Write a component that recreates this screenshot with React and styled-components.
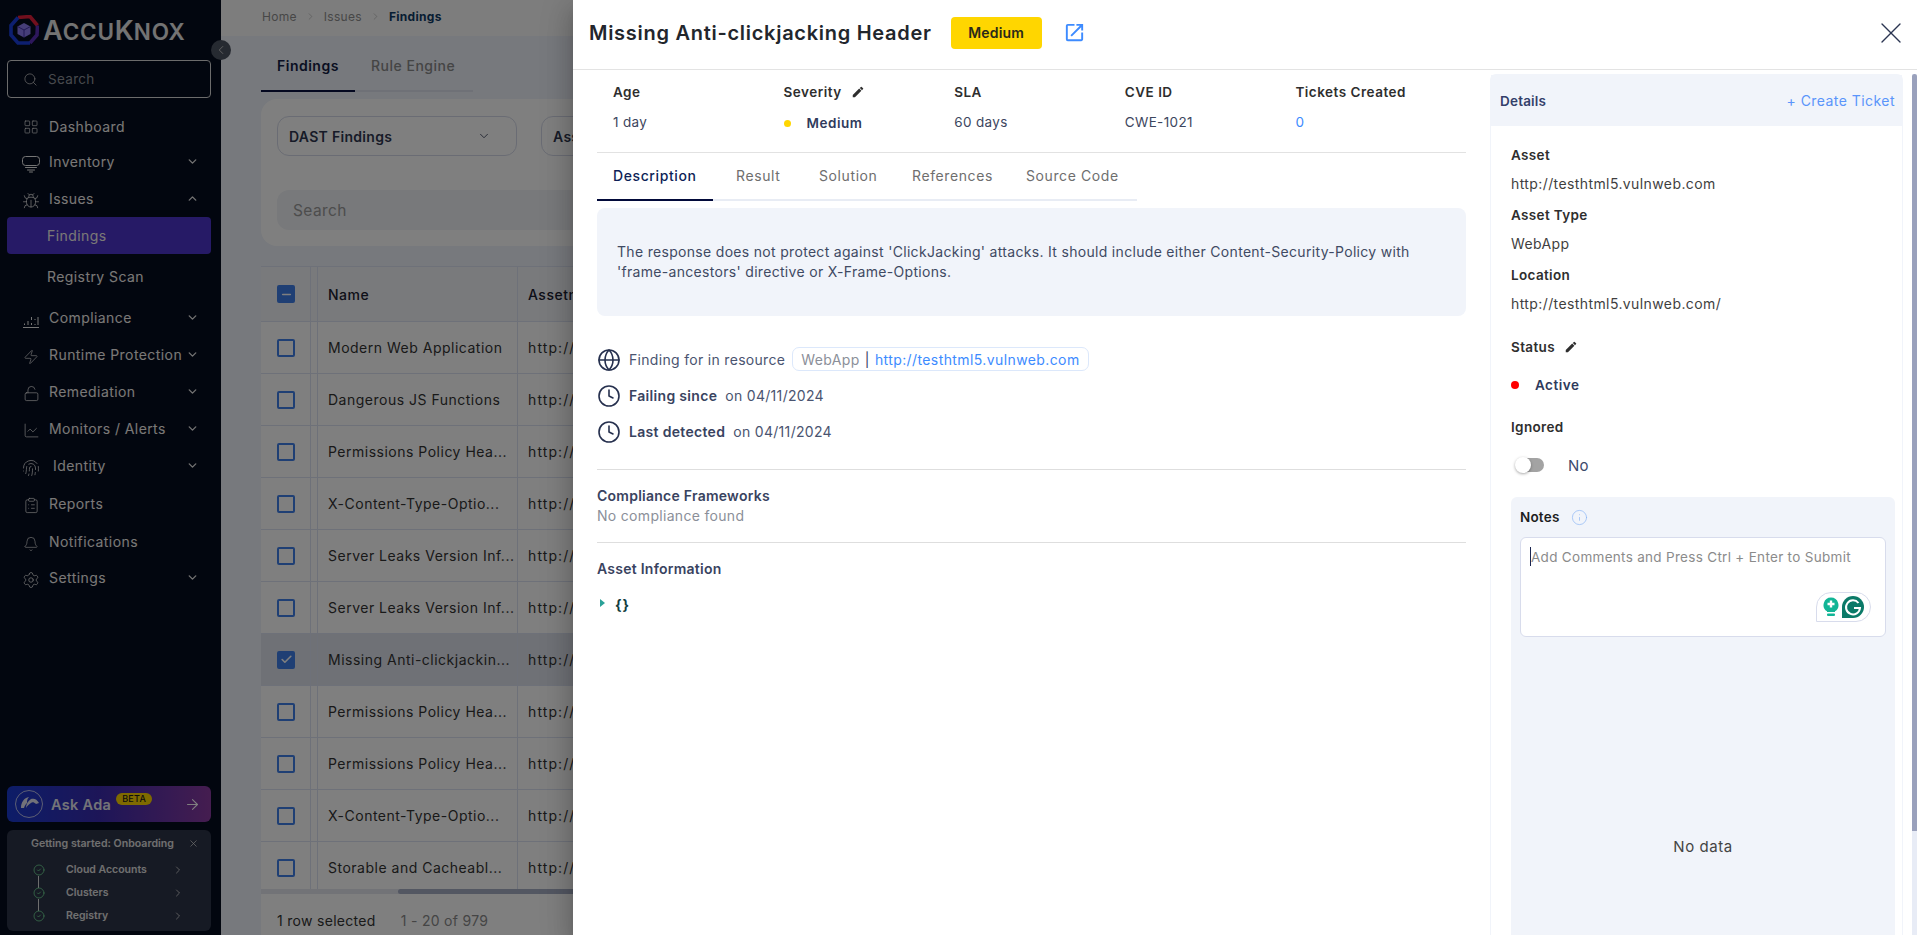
import React from "react";
import styled, { createGlobalStyle } from "styled-components";
import {
  LayoutGrid, Bug, Zap, LockOpen, ChartLine, Fingerprint, ClipboardList, Bell, Settings,
  ChevronDown, ChevronUp, ChevronRight, ChevronLeft, Search, Globe, Clock, X, Info, ArrowRight, Check, Minus, CircleCheck,
} from "lucide-react";
import { MdEdit, MdOpenInNew } from "react-icons/md";

const FONT = `"Inter", "Noto Sans", "Liberation Sans", sans-serif`;

const Global = createGlobalStyle`
  html, body { margin: 0; padding: 0; height: 100%; overflow: hidden; background: #eef2fa; }
  #root { height: 100%; }
  * { box-sizing: border-box; }
  body { font-family: ${FONT}; }
`;

const Page = styled.div`
  position: relative;
  display: flex;
  width: 1917px;
  height: 935px;
  overflow: hidden;
`;

/* ---------- sidebar ---------- */
const Sidebar = styled.aside`
  width: 221px;
  flex: none;
  height: 100%;
  background: #050c1e;
  color: #f2f2f2;
  display: flex;
  flex-direction: column;
  padding: 15px 10px 4px 7px;
  position: relative;
`;
const Logo = styled.div`
  display: flex;
  align-items: center;
  height: 30px;
  padding-left: 2px;
  gap: 4px;
  color: #e6e6e6;
  font-weight: 600;
  font-size: 27px;
  letter-spacing: 0.2px;
  line-height: 1;
`;
const LogoSmall = styled.span`
  font-size: 22.5px;
  letter-spacing: 0.7px;
`;
const SearchBox = styled.div`
  margin-top: 15px;
  height: 38px;
  border: 1px solid #d8d8d8;
  border-radius: 4px;
  display: flex;
  align-items: center;
  gap: 10px;
  padding-left: 15px;
  font-size: 13.5px;
  color: #8f939b;
  letter-spacing: 0.3px;
  svg { color: #cfcfcf; }
`;
const Nav = styled.nav`
  margin-top: 11px;
  display: flex;
  flex-direction: column;
`;
const NavItem = styled.div`
  height: ${(p) => p.$h}px;
  display: flex;
  align-items: center;
  padding-left: 13px;
  padding-right: 12px;
  font-size: 14px;
  letter-spacing: 0.42px;
  color: #f4f1ee;
`;
const NavIcon = styled.span`
  width: 18px;
  height: 18px;
  margin-right: 9px;
  margin-left: 2px;
  margin-top: ${(p) => p.$dy || 4}px;
  display: inline-flex;
  align-items: center;
  justify-content: center;
  flex: none;
  color: #ececec;
`;
const NavLabel = styled.span`
  flex: 1;
  white-space: nowrap;
  margin-left: ${(p) => p.$ml || 0}px;
`;
const SubItem = styled.div`
  height: ${(p) => p.$h}px;
  display: flex;
  align-items: center;
  padding-left: 40px;
  border-radius: 4px;
  font-size: 14px;
  letter-spacing: 0.42px;
  color: #f4f1ee;
  background: ${(p) => (p.$active ? "#4c34cc" : "transparent")};
`;
const Chev = styled.span`
  display: inline-flex;
  color: #e4e4e4;
`;
const AskAda = styled.div`
  margin-top: auto;
  height: 36px;
  border-radius: 6px;
  background: linear-gradient(90deg, #1a3ad0 0%, #3a2bb0 45%, #8a3aa0 100%);
  display: flex;
  align-items: center;
  padding: 0 10px 0 8px;
  color: #e8e8f0;
  font-size: 14.5px;
  font-weight: 600;
  letter-spacing: 0.3px;
  > svg:last-child { color: #fff; }
`;
const AdaName = styled.span`
  margin-left: 8px;
`;
const AdaBadge = styled.span`
  margin: -10px auto 0 5px;
  background: #ffd400;
  color: #1a1a1a;
  font-size: 9px;
  font-weight: 500;
  letter-spacing: 0.3px;
  padding: 1px 6px;
  border-radius: 7px;
  line-height: 10px;
`;
const StartCard = styled.div`
  margin-top: 8px;
  height: 101px;
  border-radius: 6px;
  background: #2d3448;
  padding: 6px 10px 0 24px;
  color: #e0e0e0;
  font-size: 10.5px;
  font-weight: 600;
`;
const StartTitle = styled.div`
  display: flex;
  align-items: center;
  justify-content: space-between;
  height: 14px;
  font-size: 10.6px;
  white-space: nowrap;
  padding-right: 2px;
`;
const StartRow = styled.div`
  display: flex;
  align-items: center;
  height: 23px;
  position: relative;
  margin-top: ${(p) => p.$mt || 0}px;
  padding-left: 2px;
  padding-right: 17px;
`;
const StartText = styled.span`
  margin-left: 21px;
  flex: 1;
`;
const Connector = styled.span`
  position: absolute;
  left: 7px;
  top: 18px;
  width: 1px;
  height: 12px;
  background: #dcdcdc;
`;
const Collapse = styled.span`
  position: absolute;
  left: 211px;
  top: 40px;
  width: 20px;
  height: 20px;
  border-radius: 50%;
  background: #4d5462;
  color: #c8c8c8;
  display: flex;
  align-items: center;
  justify-content: center;
  z-index: 2;
`;

/* ---------- main page behind the drawer ---------- */
const Main = styled.main`
  flex: 1;
  min-width: 0;
  display: flex;
  flex-direction: column;
  background: #eef2fa;
`;
const Crumbs = styled.div`
  height: 36px;
  flex: none;
  background: #fbfbfb;
  padding: 0 0 4px 41px;
  display: flex;
  align-items: center;
  gap: 8px;
  font-size: 12px;
  color: #8f8f8f;
  letter-spacing: 0.3px;
  b { color: #0f3a66; font-weight: 700; }
`;
const Content = styled.div`
  flex: 1;
  padding: 0 0 0 40px;
  display: flex;
  flex-direction: column;
  min-height: 0;
`;
const PageTabs = styled.div`
  display: flex;
  height: 56px;
  width: 212px;
  flex: none;
  border-bottom: 2px solid #dfe3ee;
`;
const PageTab = styled.div`
  height: 56px;
  width: ${(p) => p.$w}px;
  flex: none;
  display: flex;
  align-items: center;
  padding: 5px 0 0 16px;
  font-size: 14px;
  letter-spacing: 0.5px;
  font-weight: ${(p) => (p.$active ? 600 : 500)};
  color: ${(p) => (p.$active ? "#141d44" : "#8a8a8a")};
  border-bottom: 2px solid ${(p) => (p.$active ? "#081040" : "transparent")};
`;
const FilterCard = styled.div`
  margin-top: 7px;
  height: 147px;
  flex: none;
  border-radius: 16px;
  background: #ffffff;
  padding: 17px 16px;
`;
const FilterRow = styled.div`
  display: flex;
  gap: 24px;
`;
const Select = styled.div`
  width: 240px;
  height: 40px;
  border: 1px solid #d5d9e8;
  border-radius: 12px;
  display: flex;
  align-items: center;
  justify-content: space-between;
  padding: 0 25px 0 11px;
  font-size: 14px;
  font-weight: 600;
  color: #2f3750;
  letter-spacing: 0.3px;
  flex: none;
`;
const PageSearch = styled.div`
  margin-top: 34px;
  height: 40px;
  border-radius: 12px;
  background: #f0f2f6;
  display: flex;
  align-items: center;
  padding-left: 16px;
  font-size: 15.5px;
  letter-spacing: 0.4px;
  color: #9a9a9a;
`;
const Table = styled.div`
  margin-top: 20px;
  flex: 1;
  min-height: 0;
  overflow: hidden;
  display: flex;
  flex-direction: column;
`;
const Row = styled.div`
  display: grid;
  grid-template-columns: 49px 7px 200px 1fr;
  height: ${(p) => (p.$head ? 55 : 52)}px;
  flex: none;
  background: ${(p) => (p.$selected ? "#dfe3ec" : p.$head ? "#f2f4f8" : "#ffffff")};
  border-top: 1px solid #dde3f2;
  font-size: 14px;
  letter-spacing: 0.5px;
  color: ${(p) => (p.$head ? "#1a2030" : "#333")};
  font-weight: ${(p) => (p.$head ? 500 : 400)};
`;
const Cell = styled.div`
  display: flex;
  align-items: center;
  padding-left: ${(p) => p.$pl ?? 10}px;
  border-left: ${(p) => (p.$noLine ? "none" : "1px solid #dde3f2")};
  overflow: hidden;
  white-space: nowrap;
  min-width: 0;
  letter-spacing: ${(p) => (p.$wide ? "1.1px" : "inherit")};
`;
const Box = styled.span`
  width: 18px;
  height: 18px;
  border-radius: 2px;
  border: 2px solid #3f7fe8;
  background: ${(p) => (p.$on ? "#3f7fe8" : "transparent")};
  display: inline-flex;
  align-items: center;
  justify-content: center;
  color: #fff;
`;
const HScroll = styled.div`
  height: 5px;
  flex: none;
  background: #e4e7ef;
  padding-left: 137px;
`;
const HThumb = styled.div`
  height: 5px;
  width: 500px;
  border-radius: 3px;
  background: #a7aec4;
`;
const TableFoot = styled.div`
  height: 41px;
  flex: none;
  background: #fff;
  display: flex;
  align-items: center;
  padding: 12px 0 0 16px;
  gap: 25px;
  font-size: 14px;
  letter-spacing: 0.3px;
  color: #333;
  span { color: #8a8a8a; }
`;
const Overlay = styled.div`
  position: absolute;
  inset: 0;
  background: rgba(0, 0, 0, 0.5);
  z-index: 5;
`;

/* ---------- drawer ---------- */
const Drawer = styled.section`
  position: absolute;
  top: 0;
  right: 0;
  bottom: 0;
  width: 1344px;
  background: #fff;
  z-index: 6;
  display: flex;
  flex-direction: column;
  box-shadow: 0 8px 10px -5px rgba(0,0,0,.2), 0 16px 24px 2px rgba(0,0,0,.14), 0 6px 30px 5px rgba(0,0,0,.12);
`;
const DrawerHead = styled.header`
  height: 70px;
  flex: none;
  border-bottom: 1px solid #e3e3e3;
  display: flex;
  align-items: center;
  padding: 0 8px 4px 16px;
`;
const Title = styled.h1`
  margin: 0;
  font-size: 20px;
  font-weight: 600;
  color: #22262c;
  letter-spacing: 0.72px;
  white-space: nowrap;
`;
const Badge = styled.span`
  margin-left: 19px;
  width: 91px;
  height: 32px;
  border-radius: 4px;
  background: #ffd600;
  color: #2a2a1a;
  font-size: 14px;
  font-weight: 600;
  letter-spacing: 0.2px;
  display: flex;
  align-items: center;
  justify-content: center;
`;
const OpenLink = styled.span`
  margin-left: 21px;
  display: inline-flex;
  color: #3d8bff;
`;
const CloseBtn = styled.span`
  margin-left: auto;
  display: inline-flex;
  color: #2b3552;
`;
const DrawerBody = styled.div`
  flex: 1;
  min-height: 0;
  display: flex;
  position: relative;
`;
const LeftCol = styled.div`
  width: 917px;
  flex: none;
  padding: 0 24px;
`;
const Meta = styled.div`
  display: grid;
  grid-template-columns: repeat(5, 170.6px);
  height: 83px;
  padding-left: 16px;
  border-bottom: 1px solid #e2e2e2;
`;
const MetaCol = styled.div`
  display: flex;
  flex-direction: column;
  padding-top: 13px;
`;
const MetaLabel = styled.div`
  height: 18px;
  display: flex;
  align-items: center;
  gap: 9px;
  font-size: 13.5px;
  font-weight: 600;
  letter-spacing: 0.5px;
  color: #2e2e2e;
`;
const MetaValue = styled.div`
  margin-top: 12px;
  height: 18px;
  display: flex;
  align-items: center;
  font-size: 13.5px;
  letter-spacing: 0.35px;
  color: ${(p) => p.$color || "#3d465e"};
`;
const Dot = styled.span`
  width: ${(p) => p.$s || 7}px;
  height: ${(p) => p.$s || 7}px;
  border-radius: 50%;
  background: ${(p) => p.$color};
  flex: none;
  margin-top: ${(p) => p.$mt || 0}px;
`;
const DotText = styled.span`
  margin-left: ${(p) => p.$ml || 16}px;
  margin-top: ${(p) => p.$mt || 0}px;
  font-weight: 600;
  color: #2f3a5c;
  font-size: 13.5px;
  letter-spacing: 0.5px;
`;
const DTabs = styled.div`
  display: flex;
  width: 540px;
  height: 48px;
  border-bottom: 2px solid #e8ecf4;
`;
const DTab = styled.div`
  height: 48px;
  width: ${(p) => p.$w}px;
  flex: none;
  display: flex;
  align-items: center;
  padding: 0 0 1px ${(p) => p.$pl}px;
  font-size: 14px;
  white-space: nowrap;
  letter-spacing: 0.6px;
  font-weight: ${(p) => (p.$active ? 500 : 400)};
  color: ${(p) => (p.$active ? "#0e1f57" : "#6e6e6e")};
  border-bottom: 2px solid ${(p) => (p.$active ? "#020a3a" : "transparent")};
`;
const DescCard = styled.div`
  margin-top: 7px;
  height: 108px;
  border-radius: 8px;
  background: #f1f4fa;
  padding: 34px 20px 0;
  font-size: 14px;
  line-height: 20px;
  letter-spacing: 0.31px;
  color: #3f4a63;
  white-space: nowrap;
`;
const InfoList = styled.div`
  margin-top: 25px;
  display: flex;
  flex-direction: column;
`;
const InfoRow = styled.div`
  height: 36px;
  display: flex;
  align-items: center;
  font-size: 14px;
  letter-spacing: 0.31px;
  color: #4a5470;
  svg { color: #26304e; flex: none; margin-right: 8px; margin-top: 2px; }
  b { font-weight: 600; color: #39435f; margin-right: 8px; }
`;
const ResourceTag = styled.span`
  margin-left: 7px;
  height: 24px;
  padding: 0 8px;
  border: 1px solid #dce8fb;
  border-radius: 7px;
  display: inline-flex;
  align-items: center;
  gap: 5px;
  letter-spacing: 0.4px;
  color: #8b8f99;
  a { color: #3d8bff; text-decoration: none; }
  i { font-style: normal; color: #39435f; }
`;
const Section = styled.div`
  margin-top: ${(p) => p.$mt}px;
  border-top: 1px solid #dedede;
  padding-top: ${(p) => p.$pt}px;
  height: ${(p) => p.$h}px;
`;
const SectionTitle = styled.div`
  font-size: 14px;
  font-weight: 600;
  letter-spacing: 0.25px;
  line-height: 20px;
  color: #39435f;
`;
const SectionText = styled.div`
  font-size: 14px;
  line-height: 20px;
  letter-spacing: 0.31px;
  color: #8b8f99;
`;
const JsonRow = styled.div`
  margin-top: 15px;
  display: flex;
  align-items: center;
  gap: 10px;
  height: 20px;
  font-weight: 700;
  font-size: 14px;
  letter-spacing: 1px;
  color: #0f3d3e;
`;
const Caret = styled.span`
  width: 0;
  height: 0;
  margin-left: 3px;
  margin-top: -3px;
  border-left: 5px solid #2aa198;
  border-top: 4.5px solid transparent;
  border-bottom: 4.5px solid transparent;
`;
const RightCol = styled.div`
  width: 413px;
  flex: none;
  margin-top: 4px;
  border: 1px solid #f1f4fa;
  border-bottom: none;
  border-radius: 6px 6px 0 0;
  display: flex;
  flex-direction: column;
`;
const DetailsHead = styled.div`
  height: 51px;
  flex: none;
  background: #f1f4fa;
  display: flex;
  align-items: center;
  justify-content: space-between;
  padding: 0 7px 0 9px;
  font-size: 13.5px;
  font-weight: 600;
  letter-spacing: 0.2px;
  color: #33406a;
  span { color: #5a95fb; font-weight: 400; font-size: 14px; letter-spacing: 0.45px; }
`;
const DetailsBody = styled.div`
  flex: 1;
  padding: 19px 7px 0 20px;
  display: flex;
  flex-direction: column;
  min-height: 0;
`;
const FieldLabel = styled.div`
  height: 20px;
  display: flex;
  align-items: center;
  gap: 9px;
  font-size: 13.5px;
  font-weight: 600;
  letter-spacing: 0.35px;
  color: #2e2e2e;
  margin-top: ${(p) => p.$mt || 0}px;
`;
const FieldValue = styled.div`
  height: 20px;
  margin-top: 8px;
  display: flex;
  align-items: center;
  font-size: 14px;
  letter-spacing: 0.4px;
  color: #3f3f3f;
`;
const StatusRow = styled.div`
  height: 20px;
  margin-top: 18px;
  display: flex;
  align-items: center;
`;
const ToggleRow = styled.div`
  display: flex;
  align-items: center;
  margin-top: 18px;
  margin-left: 4px;
  height: 20px;
  font-size: 15px;
  letter-spacing: 0.2px;
  color: #3d4a6b;
`;
const Track = styled.span`
  position: relative;
  width: 27px;
  height: 14px;
  border-radius: 7px;
  background: #a3a3a3;
  margin-right: 24px;
  margin-left: 2px;
`;
const Knob = styled.span`
  position: absolute;
  left: -2px;
  top: -1px;
  width: 16px;
  height: 16px;
  border-radius: 50%;
  background: #fff;
  box-shadow: 0 1px 3px rgba(0,0,0,.35);
`;
const NotesPanel = styled.div`
  margin-top: 22px;
  flex: 1;
  border-radius: 6px 6px 0 0;
  background: #f1f4fa;
  padding: 10px 9px 0;
  display: flex;
  flex-direction: column;
  min-height: 0;
`;
const NotesHead = styled.div`
  height: 20px;
  display: flex;
  align-items: center;
  gap: 11px;
  font-size: 13.5px;
  font-weight: 600;
  letter-spacing: 0.2px;
  color: #1e1e1e;
  svg { color: #8db7f5; }
`;
const TextBox = styled.div`
  position: relative;
  margin-top: 10px;
  height: 100px;
  flex: none;
  border: 1px solid #d8dcec;
  border-radius: 6px;
  background: #fff;
  padding: 9px 9px;
  display: flex;
  align-items: flex-start;
  font-size: 13.5px;
  line-height: 20px;
  letter-spacing: 0.3px;
  color: #8b8b8b;
  white-space: nowrap;
`;
const Caretbar = styled.span`
  width: 1px;
  height: 19px;
  background: #1a2550;
  flex: none;
`;
const Grammarly = styled.span`
  position: absolute;
  right: 14px;
  bottom: 14px;
  width: 55px;
  height: 30px;
  background: #fff;
  border: 1px solid #d8dcec;
  border-radius: 15px 15px 15px 0;
  display: flex;
  align-items: center;
  justify-content: center;
  gap: 3px;
`;
const NoData = styled.div`
  flex: 1;
  display: flex;
  align-items: center;
  justify-content: center;
  font-size: 15px;
  letter-spacing: 0.55px;
  color: #444;
  padding-top: 120px;
`;
const VTrack = styled.span`
  position: absolute;
  right: 0;
  top: 4px;
  bottom: 0;
  width: 5px;
  background: #e8ecf6;
`;
const VThumb = styled.span`
  display: block;
  width: 5px;
  height: 757px;
  border-radius: 3px 3px 0 0;
  background: #9aa1bc;
`;

const InventoryIcon = () => (
  <svg width="18" height="18" viewBox="0 0 18 18" fill="none" stroke="currentColor" strokeWidth="1">
    <rect x="0.5" y="1.5" width="17" height="9" rx="3" />
    <path d="M3.5 12.5h11M5.5 15h7M7.5 17h3" strokeLinecap="round" />
  </svg>
);
const ComplianceIcon = () => (
  <svg width="18" height="18" viewBox="0 0 18 18" fill="none" stroke="currentColor" strokeWidth="1">
    <path d="M1 17.5h16M2.5 15v-1.5M6 15v-4M9.5 15v-2M9.5 10V7M13 15v-1M13 10V9M16 15V7" />
  </svg>
);
const LogoMark = () => (
  <svg width="30" height="30" viewBox="0 0 30 30">
    <path d="M9 2.5 21 1.5 28.5 10.5" fill="none" stroke="#e21f3a" strokeWidth="3.6" />
    <path d="M28.5 10.5 28 20 21 28" fill="none" stroke="#5a2fb8" strokeWidth="3.6" />
    <path d="M21 28 9 28 2 20 2 10.5 9 2.5" fill="none" stroke="#1a3fe0" strokeWidth="3.6" />
    <path d="M15 8l6.5 3.5v7.5L15 22.5 8.5 19v-7.5z" fill="#8d7cf0" />
    <path d="M8.5 11.5 15 15l6.5-3.5M15 15v7.5" fill="none" stroke="#3a2aa0" strokeWidth="0.9" />
  </svg>
);
const AdaLogo = () => (
  <svg width="28" height="28" viewBox="0 0 28 28" fill="none">
    <circle cx="14" cy="14" r="13.5" stroke="#e0e0f0" strokeWidth="0.8" />
    <path d="M6 18c0-6 3-10 8-11-2 2-2 4-2 6-1 1-2 2-3 5M11 18c0-4 2-7 5-9 3-1 6 0 8 4l-3 1c-2-2-4-2-5-1-2 1-4 3-5 5" fill="#e4e4f2" />
  </svg>
);
const GrammarlyBulb = () => (
  <svg width="16" height="20" viewBox="0 0 16 20">
    <path d="M8 0.5a7.5 7.5 0 0 0-4 13.8V15h8v-.7A7.5 7.5 0 0 0 8 .5z" fill="#12b596" />
    <path d="M8 3.5v7M4.5 7h7" stroke="#fff" strokeWidth="2.4" />
    <rect x="4" y="16.5" width="8" height="2.5" rx="1" fill="#12b596" />
  </svg>
);
const GrammarlyG = () => (
  <svg width="22" height="22" viewBox="0 0 22 22">
    <path d="M11 0a11 11 0 1 1 0 22H0V11A11 11 0 0 1 11 0z" fill="#0b7a68" />
    <path d="M16.5 7a7 7 0 1 0 1.5 5h-6" fill="none" stroke="#fff" strokeWidth="2" />
  </svg>
);

const rows = [
  "Modern Web Application",
  "Dangerous JS Functions",
  "Permissions Policy Hea...",
  "X-Content-Type-Optio...",
  "Server Leaks Version Inf...",
  "Server Leaks Version Inf...",
  "Missing Anti-clickjackin...",
  "Permissions Policy Hea...",
  "Permissions Policy Hea...",
  "X-Content-Type-Optio...",
  "Storable and Cacheabl...",
];

const Down = () => <Chev><ChevronDown size={13} strokeWidth={2.6} /></Chev>;
const Done = () => <CircleCheck size={12} strokeWidth={1.5} color="#74e89c" />;

export default function App() {
  return (
    <Page>
      <Global />
      <Sidebar>
        <Logo>
          <LogoMark />
          <span>A<LogoSmall>CCU</LogoSmall>K<LogoSmall>NOX</LogoSmall></span>
        </Logo>
        <SearchBox><Search size={15} strokeWidth={1.2} />Search</SearchBox>
        <Nav>
          <NavItem $h={35}><NavIcon $dy={1}><LayoutGrid size={16} strokeWidth={1} /></NavIcon><NavLabel>Dashboard</NavLabel></NavItem>
          <NavItem $h={35}><NavIcon><InventoryIcon /></NavIcon><NavLabel>Inventory</NavLabel><Down /></NavItem>
          <NavItem $h={38}><NavIcon $dy={5}><Bug size={18} strokeWidth={1} /></NavIcon><NavLabel>Issues</NavLabel><Chev><ChevronUp size={13} strokeWidth={2.6} /></Chev></NavItem>
          <SubItem $h={37} $active>Findings</SubItem>
          <SubItem $h={44}>Registry Scan</SubItem>
          <NavItem $h={38}><NavIcon><ComplianceIcon /></NavIcon><NavLabel>Compliance</NavLabel><Down /></NavItem>
          <NavItem $h={37}><NavIcon><Zap size={16} strokeWidth={1} /></NavIcon><NavLabel>Runtime Protection</NavLabel><Down /></NavItem>
          <NavItem $h={37}><NavIcon><LockOpen size={17} strokeWidth={1} /></NavIcon><NavLabel>Remediation</NavLabel><Down /></NavItem>
          <NavItem $h={37}><NavIcon><ChartLine size={17} strokeWidth={1} /></NavIcon><NavLabel>Monitors / Alerts</NavLabel><Down /></NavItem>
          <NavItem $h={37}><NavIcon><Fingerprint size={18} strokeWidth={1} /></NavIcon><NavLabel $ml={4}>Identity</NavLabel><Down /></NavItem>
          <NavItem $h={39}><NavIcon><ClipboardList size={17} strokeWidth={1} /></NavIcon><NavLabel>Reports</NavLabel></NavItem>
          <NavItem $h={37}><NavIcon><Bell size={16} strokeWidth={1} /></NavIcon><NavLabel>Notifications</NavLabel></NavItem>
          <NavItem $h={35}><NavIcon><Settings size={18} strokeWidth={1} /></NavIcon><NavLabel>Settings</NavLabel><Down /></NavItem>
        </Nav>
        <AskAda>
          <AdaLogo />
          <AdaName>Ask Ada</AdaName>
          <AdaBadge>BETA</AdaBadge>
          <ArrowRight size={17} strokeWidth={1.5} />
        </AskAda>
        <StartCard>
          <StartTitle>Getting started: Onboarding<X size={11} strokeWidth={1.5} /></StartTitle>
          <StartRow $mt={8}>
            <Done />
            <Connector />
            <StartText>Cloud Accounts</StartText>
            <ChevronRight size={12} strokeWidth={1.5} />
          </StartRow>
          <StartRow>
            <Done />
            <Connector />
            <StartText>Clusters</StartText>
            <ChevronRight size={12} strokeWidth={1.5} />
          </StartRow>
          <StartRow>
            <Done />
            <StartText>Registry</StartText>
            <ChevronRight size={12} strokeWidth={1.5} />
          </StartRow>
        </StartCard>
        <Collapse><ChevronLeft size={14} strokeWidth={1.6} /></Collapse>
      </Sidebar>

      <Main>
        <Crumbs>Home <ChevronRight size={11} strokeWidth={1} /> Issues <ChevronRight size={11} strokeWidth={1} /> <b>Findings</b></Crumbs>
        <Content>
          <PageTabs>
            <PageTab $active $w={94}>Findings</PageTab>
            <PageTab $w={118}>Rule Engine</PageTab>
          </PageTabs>
          <FilterCard>
            <FilterRow>
              <Select>DAST Findings <ChevronDown size={14} strokeWidth={1.4} /></Select>
              <Select>Asset</Select>
            </FilterRow>
            <PageSearch>Search</PageSearch>
          </FilterCard>
          <Table>
            <Row $head>
              <Cell $noLine $pl={16}><Box $on><Minus size={13} strokeWidth={3} /></Box></Cell>
              <Cell />
              <Cell>Name</Cell>
              <Cell>Assetname</Cell>
            </Row>
            {rows.map((name, i) => (
              <Row key={i} $selected={i === 6}>
                <Cell $noLine $pl={16}>
                  <Box $on={i === 6}>{i === 6 && <Check size={13} strokeWidth={3} />}</Box>
                </Cell>
                <Cell />
                <Cell>{name}</Cell>
                <Cell $wide>http://testhtml5.vulnweb.com</Cell>
              </Row>
            ))}
          </Table>
          <HScroll><HThumb /></HScroll>
          <TableFoot>1 row selected <span>1 - 20 of 979</span></TableFoot>
        </Content>
      </Main>

      <Overlay />

      <Drawer>
        <DrawerHead>
          <Title>Missing Anti-clickjacking Header</Title>
          <Badge>Medium</Badge>
          <OpenLink><MdOpenInNew size={23} /></OpenLink>
          <CloseBtn><X size={36} strokeWidth={0.9} /></CloseBtn>
        </DrawerHead>
        <DrawerBody>
          <LeftCol>
            <Meta>
              <MetaCol><MetaLabel>Age</MetaLabel><MetaValue>1 day</MetaValue></MetaCol>
              <MetaCol>
                <MetaLabel>Severity <MdEdit size={14} /></MetaLabel>
                <MetaValue><Dot $color="#ffd600" $mt={2} /><DotText $mt={2}>Medium</DotText></MetaValue>
              </MetaCol>
              <MetaCol><MetaLabel>SLA</MetaLabel><MetaValue>60 days</MetaValue></MetaCol>
              <MetaCol><MetaLabel>CVE ID</MetaLabel><MetaValue>CWE-1021</MetaValue></MetaCol>
              <MetaCol><MetaLabel>Tickets Created</MetaLabel><MetaValue $color="#3d8bff">0</MetaValue></MetaCol>
            </Meta>
            <DTabs>
              <DTab $active $w={116} $pl={16}>Description</DTab>
              <DTab $w={83} $pl={23}>Result</DTab>
              <DTab $w={93} $pl={23}>Solution</DTab>
              <DTab $w={114} $pl={23}>References</DTab>
              <DTab $w={134} $pl={23}>Source Code</DTab>
            </DTabs>
            <DescCard>
              The response does not protect against 'ClickJacking' attacks. It should include either Content-Security-Policy with<br />
              'frame-ancestors' directive or X-Frame-Options.
            </DescCard>
            <InfoList>
              <InfoRow>
                <Globe size={24} strokeWidth={1.6} />Finding for in resource
                <ResourceTag>WebApp <i>|</i> <a>http://testhtml5.vulnweb.com</a></ResourceTag>
              </InfoRow>
              <InfoRow><Clock size={24} strokeWidth={1.6} /><b>Failing since</b> on 04/11/2024</InfoRow>
              <InfoRow><Clock size={24} strokeWidth={1.6} /><b>Last detected</b> on 04/11/2024</InfoRow>
            </InfoList>
            <Section $mt={20} $pt={16} $h={73}>
              <SectionTitle>Compliance Frameworks</SectionTitle>
              <SectionText>No compliance found</SectionText>
            </Section>
            <Section $mt={0} $pt={16} $h={100}>
              <SectionTitle>Asset Information</SectionTitle>
              <JsonRow><Caret />{"{}"}</JsonRow>
            </Section>
          </LeftCol>
          <RightCol>
            <DetailsHead>Details<span>+ Create Ticket</span></DetailsHead>
            <DetailsBody>
              <FieldLabel>Asset</FieldLabel>
              <FieldValue>http://testhtml5.vulnweb.com</FieldValue>
              <FieldLabel $mt={12}>Asset Type</FieldLabel>
              <FieldValue>WebApp</FieldValue>
              <FieldLabel $mt={12}>Location</FieldLabel>
              <FieldValue>http://testhtml5.vulnweb.com/</FieldValue>
              <FieldLabel $mt={24}>Status <MdEdit size={14} /></FieldLabel>
              <StatusRow><Dot $color="#ff0000" $s={8} /><DotText>Active</DotText></StatusRow>
              <FieldLabel $mt={22}>Ignored</FieldLabel>
              <ToggleRow><Track><Knob /></Track>No</ToggleRow>
              <NotesPanel>
                <NotesHead>Notes <Info size={17} strokeWidth={1} /></NotesHead>
                <TextBox>
                  <Caretbar />Add Comments and Press Ctrl + Enter to Submit
                  <Grammarly><GrammarlyBulb /><GrammarlyG /></Grammarly>
                </TextBox>
                <NoData>No data</NoData>
              </NotesPanel>
            </DetailsBody>
          </RightCol>
          <VTrack><VThumb /></VTrack>
        </DrawerBody>
      </Drawer>
    </Page>
  );
}
